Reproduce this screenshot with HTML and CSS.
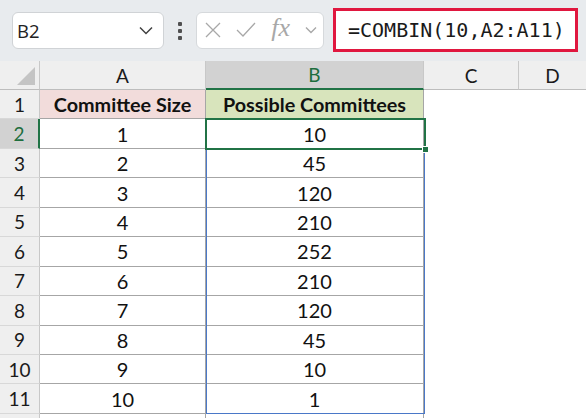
FILE: index.html
```html
<!DOCTYPE html>
<html>
<head>
<meta charset="utf-8">
<link rel="stylesheet" href="styles.css">
</head>
<body>
<div class="toolbar">
  <div class="namebox">
    <span class="name">B2</span>
    <svg class="chev" width="14" height="9" viewBox="0 0 14 9"><path d="M1 1.5 L7 7.5 L13 1.5" fill="none" stroke="#404040" stroke-width="1.5"/></svg>
  </div>
  <div class="dots"><i></i><i></i><i></i></div>
  <div class="fxbox">
    <svg width="16" height="16" viewBox="0 0 16 16"><path d="M1 1 L15 15 M15 1 L1 15" stroke="#a8a8a8" stroke-width="1.3" fill="none"/></svg>
    <svg width="20" height="16" viewBox="0 0 20 16"><path d="M1 8 L7 14 L19 1" stroke="#a8a8a8" stroke-width="1.3" fill="none"/></svg>
    <span class="fx">fx</span>
    <svg width="12" height="8" viewBox="0 0 12 8"><path d="M1 1.5 L6 6.5 L11 1.5" fill="none" stroke="#a8a8a8" stroke-width="1.4"/></svg>
  </div>
  <div class="formula">=COMBIN(10,A2:A11)</div>
</div>
<div class="sheet">
  <div class="grid">
    <div class="corner"><span class="tri"></span></div>
    <div class="ch">A</div>
    <div class="ch sel">B</div>
    <div class="ch">C</div>
    <div class="ch last">D</div>

    <div class="rh">1</div>
    <div class="c hdr pink">Committee Size</div>
    <div class="c hdr green">Possible Committees</div>
    <div class="e"></div><div class="e"></div>

    <div class="rh rsel">2</div><div class="c">1</div><div class="c">10</div><div class="e"></div><div class="e"></div>
    <div class="rh">3</div><div class="c">2</div><div class="c">45</div><div class="e"></div><div class="e"></div>
    <div class="rh">4</div><div class="c">3</div><div class="c">120</div><div class="e"></div><div class="e"></div>
    <div class="rh">5</div><div class="c">4</div><div class="c">210</div><div class="e"></div><div class="e"></div>
    <div class="rh">6</div><div class="c">5</div><div class="c">252</div><div class="e"></div><div class="e"></div>
    <div class="rh">7</div><div class="c">6</div><div class="c">210</div><div class="e"></div><div class="e"></div>
    <div class="rh">8</div><div class="c">7</div><div class="c">120</div><div class="e"></div><div class="e"></div>
    <div class="rh">9</div><div class="c">8</div><div class="c">45</div><div class="e"></div><div class="e"></div>
    <div class="rh">10</div><div class="c">9</div><div class="c">10</div><div class="e"></div><div class="e"></div>
    <div class="rh">11</div><div class="c">10</div><div class="c">1</div><div class="e"></div><div class="e"></div>
    <div class="rh"></div><div class="c"></div><div class="c"></div><div class="e"></div><div class="e"></div>
  </div>
  <div class="range"></div>
  <div class="active"><span class="handle"></span></div>
</div>
</body>
</html>
```

FILE: styles.css
```css
* { box-sizing: border-box; }
html, body { margin: 0; padding: 0; }
body {
  width: 586px;
  height: 418px;
  overflow: hidden;
  background: #ffffff;
  font-family: Lato, "Open Sans", sans-serif;
  color: #000;
}
.toolbar {
  height: 61px;
  background: #e8ebee;
  display: flex;
  align-items: center;
  padding: 0 8px 0 12px;
  position: relative;
}
.namebox {
  width: 152px;
  height: 37px;
  background: #fff;
  border: 1px solid #d0d3d6;
  border-radius: 6px;
  display: flex;
  align-items: center;
  justify-content: space-between;
  padding: 0 10px 0 4px;
  margin-top: -1px;
}
.name {
  font-family: "Open Sans", sans-serif;
  font-size: 18.5px;
  color: #222;
}
.dots {
  width: 32px;
  display: flex;
  flex-direction: column;
  align-items: center;
  gap: 3px;
}
.dots i {
  display: block;
  width: 4px;
  height: 4px;
  background: #505050;
  border-radius: 1px;
}
.fxbox {
  width: 128px;
  height: 37px;
  margin-top: -1px;
  background: #fff;
  border: 1px solid #d6d9dc;
  border-radius: 6px;
  display: flex;
  align-items: center;
  padding: 0 6px 0 8px;
  justify-content: space-between;
}
.fx {
  font-family: "Liberation Serif", serif;
  font-style: italic;
  font-size: 26px;
  color: #a8a8a8;
  letter-spacing: 0;
  margin-top: -4px;
}
.formula {
  margin-left: 9px;
  width: 245px;
  height: 44px;
  margin-top: -1px;
  border: 3px solid #e0173f;
  background: #fff;
  font-family: "DejaVu Sans Mono", monospace;
  font-size: 20px;
  line-height: 38px;
  padding-left: 12px;
  color: #1a1a1a;
  white-space: nowrap;
}
.sheet {
  position: relative;
}
.grid {
  display: grid;
  grid-template-columns: 40px 166px 218px 95px 67px;
  grid-template-rows: 29px repeat(11, 29.45px) 20px;
}
.corner {
  background: #efefef;
  border-right: 1px solid #c8c8c8;
  border-bottom: 1px solid #bdbdbd;
  position: relative;
}
.tri {
  position: absolute;
  right: 4px;
  bottom: 4px;
  width: 0;
  height: 0;
  border-left: 18px solid transparent;
  border-bottom: 18px solid #c4c4c4;
}
.ch {
  background: #efefef;
  border-right: 1px solid #c8c8c8;
  border-bottom: 1px solid #bdbdbd;
  display: flex;
  align-items: center;
  justify-content: center;
  font-size: 19px;
  color: #1a1a1a;
}
.ch.last { border-right: none; }
.ch.sel {
  background: #d2d2d2;
  color: #1e6e3e;
  border-bottom: 2px solid #217346;
}
.rh {
  background: #efefef;
  border-right: 1px solid #c8c8c8;
  border-bottom: 1px solid #d8d8d8;
  display: flex;
  align-items: center;
  justify-content: center;
  font-size: 19px;
  color: #1a1a1a;
}
.rh.rsel {
  background: #d2d2d2;
  color: #1e6e3e;
  border-right: 2px solid #217346;
}
.c {
  border-right: 1px solid #a6a6a6;
  border-bottom: 1px solid #a6a6a6;
  display: flex;
  align-items: center;
  justify-content: center;
  font-size: 20px;
  color: #111;
}
.c.hdr { font-weight: bold; font-size: 19.8px; }
.c.pink { background: #f2dcdb; }
.c.green { background: #d8e4bc; }
.e { background: #fff; }
.range {
  position: absolute;
  left: 206px;
  top: 58px;
  width: 219px;
  height: 295px;
  border: 1.5px solid #4a78c8;
}
.active {
  position: absolute;
  left: 205px;
  top: 57px;
  width: 221px;
  height: 32px;
  border: 2px solid #217346;
}
.handle {
  position: absolute;
  right: -5px;
  bottom: -5px;
  width: 7px;
  height: 7px;
  background: #217346;
  border: 1px solid #fff;
}
```
